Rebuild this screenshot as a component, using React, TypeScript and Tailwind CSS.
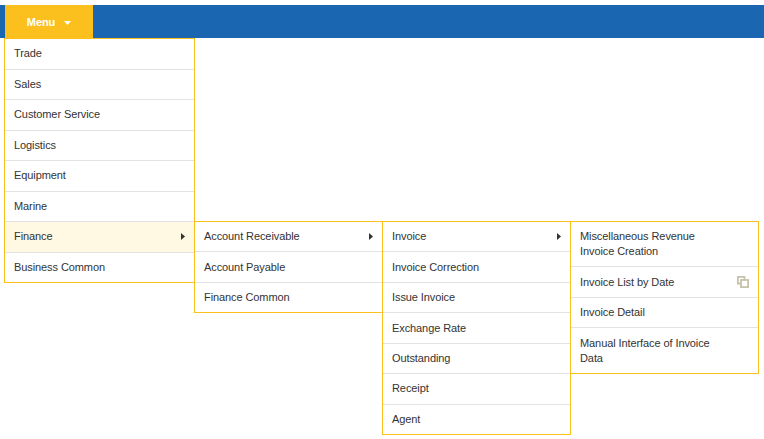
type Item = { label: string; arrow?: boolean; active?: boolean; copy?: boolean };

const level1: Item[] = [
  { label: "Trade" },
  { label: "Sales" },
  { label: "Customer Service" },
  { label: "Logistics" },
  { label: "Equipment" },
  { label: "Marine" },
  { label: "Finance", arrow: true, active: true },
  { label: "Business Common" },
];
const level2: Item[] = [
  { label: "Account Receivable", arrow: true },
  { label: "Account Payable" },
  { label: "Finance Common" },
];
const level3: Item[] = [
  { label: "Invoice", arrow: true },
  { label: "Invoice Correction" },
  { label: "Issue Invoice" },
  { label: "Exchange Rate" },
  { label: "Outstanding" },
  { label: "Receipt" },
  { label: "Agent" },
];
const level4: Item[] = [
  { label: "Miscellaneous Revenue Invoice Creation" },
  { label: "Invoice List by Date", copy: true },
  { label: "Invoice Detail" },
  { label: "Manual Interface of Invoice Data" },
];

function Caret() {
  return (
    <svg width="4" height="7" viewBox="0 0 4 7" className="absolute right-[9px] top-[11px]">
      <path d="M0 0 L4 3.5 L0 7 Z" fill="#333333" />
    </svg>
  );
}

function CopyIcon() {
  return (
    <svg width="12" height="12" viewBox="0 0 12 12" fill="none" stroke="#c6c2ac" strokeWidth="1.8" className="absolute right-[9px] top-[9px]">
      <path d="M7.5 3.5 V0.9 H0.9 V7.5 H3.5" />
      <rect x="4" y="4" width="7.1" height="7.1" />
    </svg>
  );
}

function Panel({ items, className, rowPad }: { items: Item[]; className: string; rowPad: string }) {
  return (
    <ul className={`bg-white border border-[#fcc01e] ${className}`}>
      {items.map((it, i) => (
        <li
          key={it.label}
          className={`relative ${rowPad} pl-[9px] pr-[40px] text-[11px] leading-[15px] tracking-[-0.09px] text-[#333333] ${
            i > 0 ? "border-t border-[#e2e2e2]" : ""
          } ${it.active ? "bg-[#fff8e3]" : ""}`}
        >
          {it.label}
          {it.arrow && <Caret />}
          {it.copy && <CopyIcon />}
        </li>
      ))}
    </ul>
  );
}

export default function App() {
  const pad = "py-[7.225px]";
  return (
    <div className="relative h-[439px] w-[764px] overflow-hidden bg-white pt-[5px] font-['Liberation_Sans',Arial,sans-serif]">
      <header className="flex h-[33px] bg-[#1a66b0] pl-[5px]">
        <div className="flex w-[88px] items-center justify-center gap-[9px] pt-[2px] bg-[#fcc01e] text-[11px] font-bold tracking-[-0.09px] text-white">
          <span>Menu</span>
          <svg width="7" height="4" viewBox="0 0 7 4">
            <path d="M0 0 H7 L3.5 4 Z" fill="#ffffff" />
          </svg>
        </div>
      </header>
      <div className="absolute left-[4px] top-[38.45px] flex items-start">
        <Panel items={level1} rowPad="pt-[7px] pb-[7.45px]" className="w-[191px]" />
        <Panel items={level2} rowPad={pad} className="-ml-px mt-[182.55px] w-[189px]" />
        <Panel items={level3} rowPad={pad} className="-ml-px mt-[182.55px] w-[189px]" />
        <Panel items={level4} rowPad={pad} className="-ml-px mt-[182.55px] w-[189px]" />
      </div>
    </div>
  );
}
